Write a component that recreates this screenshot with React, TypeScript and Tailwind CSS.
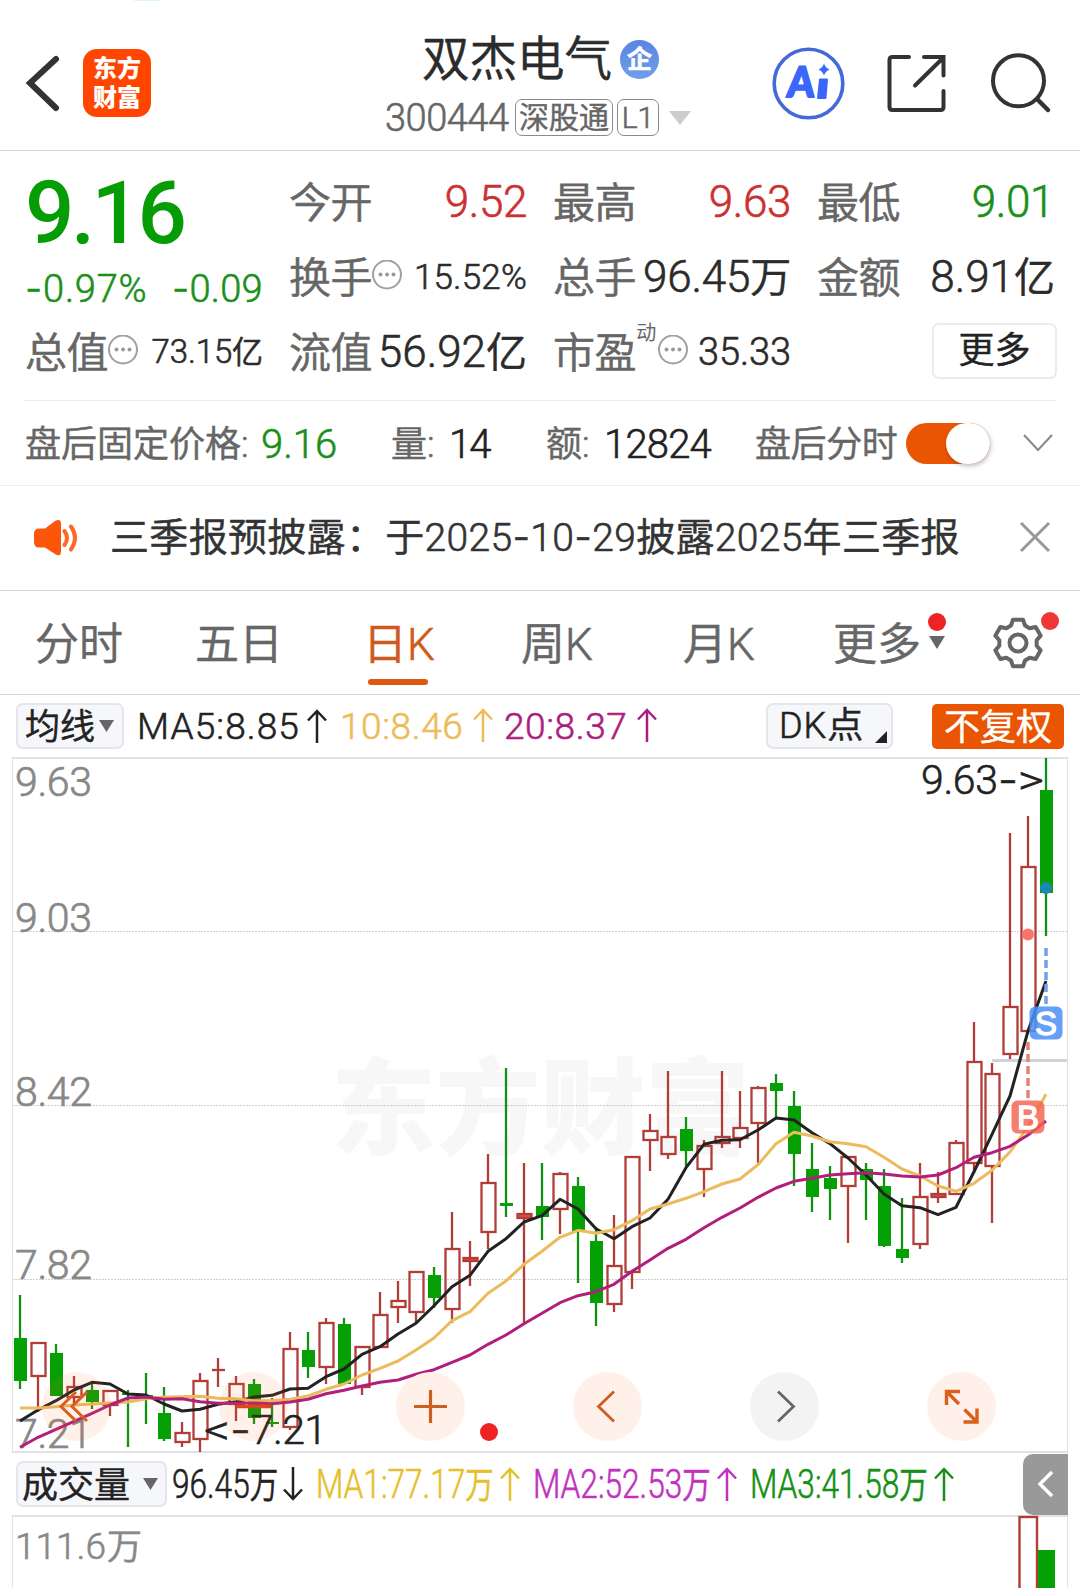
import type { ReactNode } from 'react';

type Candle = [up: boolean, high: number, top: number, bottom: number, low: number];

// [rising, high, body top, body bottom, low]
const candles: Candle[] = [
  [false, 1295, 1338, 1381, 1389],
  [true, 1343, 1343, 1376, 1412],
  [false, 1344, 1353, 1396, 1396],
  [true, 1376, 1387, 1397, 1405],
  [false, 1383, 1390, 1402, 1409],
  [true, 1390, 1391, 1405, 1416],
  [false, 1390, 1393, 1395, 1447],
  [false, 1373, 1395, 1397, 1424],
  [false, 1387, 1413, 1439, 1441],
  [true, 1422, 1433, 1442, 1447],
  [true, 1373, 1381, 1439, 1452],
  [true, 1358, 1370, 1370, 1387],
  [true, 1376, 1384, 1404, 1421],
  [false, 1379, 1384, 1418, 1424],
  [false, 1398, 1422, 1424, 1427],
  [true, 1332, 1349, 1427, 1430],
  [false, 1332, 1350, 1367, 1378],
  [true, 1318, 1323, 1367, 1384],
  [false, 1318, 1324, 1384, 1384],
  [true, 1346, 1347, 1387, 1395],
  [true, 1292, 1315, 1347, 1347],
  [true, 1281, 1301, 1307, 1323],
  [true, 1272, 1272, 1312, 1323],
  [false, 1267, 1275, 1298, 1308],
  [true, 1212, 1249, 1309, 1323],
  [true, 1241, 1258, 1261, 1286],
  [true, 1154, 1183, 1232, 1249],
  [false, 1068, 1203, 1206, 1217],
  [true, 1163, 1214, 1218, 1323],
  [false, 1163, 1206, 1217, 1240],
  [true, 1172, 1174, 1209, 1234],
  [false, 1177, 1186, 1231, 1283],
  [false, 1227, 1241, 1303, 1326],
  [true, 1215, 1266, 1304, 1312],
  [true, 1157, 1157, 1272, 1289],
  [true, 1114, 1131, 1140, 1171],
  [true, 1071, 1137, 1154, 1159],
  [false, 1117, 1129, 1151, 1166],
  [true, 1140, 1146, 1169, 1197],
  [true, 1071, 1137, 1143, 1148],
  [true, 1091, 1128, 1138, 1148],
  [true, 1086, 1088, 1123, 1163],
  [false, 1074, 1083, 1091, 1117],
  [false, 1091, 1106, 1154, 1186],
  [false, 1143, 1169, 1197, 1212],
  [false, 1166, 1178, 1189, 1220],
  [true, 1157, 1157, 1186, 1243],
  [false, 1163, 1169, 1180, 1220],
  [false, 1169, 1186, 1246, 1247],
  [false, 1198, 1249, 1258, 1263],
  [true, 1163, 1197, 1244, 1249],
  [true, 1172, 1194, 1197, 1203],
  [true, 1140, 1143, 1194, 1194],
  [true, 1022, 1062, 1163, 1173],
  [true, 1063, 1074, 1166, 1223],
  [true, 833, 1007, 1054, 1059],
  [true, 816, 867, 1031, 1031],
  [false, 758, 790, 893, 936],
];

const ma5 = [
  1421, 1410, 1400.7, 1390, 1382.3, 1384, 1394, 1395, 1404, 1411, 1409.3, 1404.3, 1401.7, 1397, 1395.3, 1389, 1388.3,
  1376.7, 1369, 1354.3, 1346.7, 1334, 1323.3, 1305.7, 1286.7, 1275.3, 1251.3, 1238.7, 1222, 1215.7, 1199.3, 1209,
  1228.7, 1238.7, 1226.7, 1218, 1199.3, 1167.7, 1144.3, 1140.3, 1139.7, 1130, 1118, 1120, 1132.7, 1143.7, 1158, 1175,
  1194, 1205.7, 1207.7, 1214.7, 1207.3, 1171.7, 1134.3, 1096, 1031, 981,
];

const ma10 = [
  1408, 1408, 1406.7, 1405, 1404, 1403, 1402, 1398.7, 1397, 1396.7, 1396.3, 1398.3, 1398.7, 1400.7, 1400.7, 1399.3,
  1396, 1389.3, 1384, 1375, 1368.3, 1361, 1350, 1338, 1320.7, 1311.7, 1293.3, 1281, 1264.3, 1251.3, 1237.3, 1230.3,
  1233.3, 1229.7, 1220.7, 1209, 1204, 1198.3, 1191.7, 1184, 1179, 1164.7, 1143.7, 1132.3, 1136, 1141.7, 1143.7,
  1146.7, 1157.3, 1169, 1176, 1186, 1191.3, 1183.3, 1170.3, 1152, 1126.7, 1094.3,
];

const ma20 = [
  1447.3, 1437.3, 1429.3, 1421.3, 1413.3, 1405, 1398, 1397, 1399.3, 1398.7, 1401.7, 1403.3, 1403.3, 1403, 1403.7, 1402,
  1399.3, 1393.7, 1390.3, 1386, 1382.3, 1380, 1374.3, 1369.7, 1362.3, 1355, 1344.3, 1335, 1323.7, 1313.3, 1302.7,
  1295.7, 1291.7, 1284.3, 1271.3, 1260, 1248.3, 1239.3, 1227.7, 1217.3, 1208, 1197.3, 1188, 1181.3, 1178.3, 1175,
  1173.7, 1172.7, 1174, 1176, 1177, 1175, 1167.7, 1157.3, 1152.7, 1146.3, 1135, 1121,
];

const toPoints = (ys: number[]) => ys.map((y, i) => `${20 + i * 18},${y}`).join(' ');

const gearPoints = [0, 1, 2, 3, 4, 5]
  .flatMap((k) => {
    const a = (k * Math.PI) / 3;
    return [
      [-7, -17.5],
      [-5, -23.3],
      [5, -23.3],
      [7, -17.5],
    ].map(([x, y]) => `${x * Math.cos(a) - y * Math.sin(a)},${x * Math.sin(a) + y * Math.cos(a)}`);
  })
  .join(' ');

// Roboto's hyphen is too short for prices and dates
const Num = ({ children }: { children: string }) => (
  <>
    {children.split('-').map((part, i) => (
      <span key={i}>
        {i > 0 && <span className="font-['Inter']">-</span>}
        {part}
      </span>
    ))}
  </>
);

const MoreDots = () => (
  <svg width="30" height="32" viewBox="0 0 30 32" className="mb-[2px] shrink-0">
    <circle cx="15" cy="14.500" r="14" fill="none" stroke="#a0a0a0" strokeWidth="2" />
    <circle cx="8.5" cy="14.500" r="2" fill="#999" />
    <circle cx="15" cy="14.500" r="2" fill="#999" />
    <circle cx="21.5" cy="14.500" r="2" fill="#999" />
  </svg>
);

const Arrow = ({ down = false }: { down?: boolean }) => (
  <svg width="20" height="34" viewBox="0 0 20 34" className={down ? 'shrink-0 rotate-180' : 'shrink-0'}>
    <path d="M10 34V2M1 11.5L10 2L19 11.5" fill="none" stroke="currentColor" strokeWidth="2.5" />
  </svg>
);

const Cell = ({ label, children, className = '' }: { label: string; children: ReactNode; className?: string }) => (
  <div className={`flex h-[75px] items-center whitespace-nowrap text-[42px] text-[#2b2b2b] ${className}`}>
    <span className="pt-[4px] tracking-[-0.4px] text-[#666]">{label}</span>
    {children}
  </div>
);

const Header = () => (
  <header className="flex h-[151px] border-b border-[#d5d5d5] pl-[25px]">
    <svg width="36" height="60" viewBox="0 0 36 60" className="mt-[53px]">
      <path d="M31 6L5 30L31 55" fill="none" stroke="#333" strokeWidth="6" strokeLinecap="round" />
    </svg>
    <div className="mt-[49px] ml-[22px] flex h-[68px] w-[68px] flex-col items-center justify-center rounded-[14px] bg-[#ff4500] pt-[2px] text-[24px] leading-[29px] font-black text-white [-webkit-text-stroke:0px]">
      <span>东方</span>
      <span>财富</span>
    </div>

    <div className="ml-[233px] w-[310px] pt-[34px]">
      <div className="flex h-[50px] items-center pl-[38px]">
        <span className="w-[198px] pt-[4px] text-[47.5px] leading-none whitespace-nowrap text-[#2b2b2b]">双杰电气</span>
        <span className="flex h-[39px] w-[39px] items-center justify-center rounded-full bg-linear-to-b from-[#5a84e2] to-[#719eea] pt-[1px] text-[25px] leading-none font-bold text-white">
          企
        </span>
      </div>
      <div className="mt-[15px] flex h-[37px] items-center text-[#666]">
        <span className="w-[131px] pl-[1px] text-[38px] leading-none tracking-[-0.5px]">300444</span>
        <span className="flex h-[37px] w-[98px] items-center justify-center rounded-[7px] border border-[#8a8a8a] text-[30px] leading-none">
          深股通
        </span>
        <span className="ml-[4px] flex h-[37px] w-[42px] items-center justify-center rounded-[7px] border border-[#8a8a8a] text-[30px] leading-none">
          L1
        </span>
        <svg width="22" height="14" viewBox="0 0 22 14" className="ml-[10px]">
          <path d="M0 0H22L11 14Z" fill="#ccc" />
        </svg>
      </div>
    </div>

    <svg width="74" height="76" viewBox="771 45 74 76" className="mt-[45px] ml-[77px]">
      <circle cx="808.5" cy="83.5" r="34.3" fill="none" stroke="#4469d8" strokeWidth="3.6" />
      <g fill="#3a66fb" stroke="#3a66fb" strokeWidth="2" strokeLinejoin="round">
        <text x="0" y="0" transform="translate(786.5 97) skewX(-4)" fontFamily="Lato" fontWeight="900" fontSize="42" textLength="27" lengthAdjust="spacingAndGlyphs">
          A
        </text>
        <path d="M820 79.500H827L825.500 98H818Z" />
      </g>
      <path d="M824 63.500Q825.500 68 829.500 69.500Q825.500 71 824 75.500Q822.500 71 818.500 69.500Q822.500 68 824 63.500Z" fill="#3a66fb" />
    </svg>
    <svg width="62" height="62" viewBox="886 53 62 62" className="mt-[53px] ml-[41px]">
      <path
        d="M909 57H892.500Q889.500 57 889.500 60V107Q889.500 110 892.500 110H940.500Q943.500 110 943.500 107V91M924 57H943.500V75.500M942 59L915 85.500"
        fill="none"
        stroke="#333"
        strokeWidth="4"
        strokeLinecap="round"
      />
    </svg>
    <svg width="64" height="64" viewBox="988 51 64 64" className="mt-[51px] ml-[40px]">
      <circle cx="1018.500" cy="80.800" r="25.500" fill="none" stroke="#333" strokeWidth="4" />
      <path d="M1037 99L1048 110" stroke="#333" strokeWidth="4.500" strokeLinecap="round" />
    </svg>
  </header>
);

const Quote = () => (
  <section className="px-[25px] pt-[13px]">
    <div className="grid grid-cols-[238px_238px_238px_238px] gap-x-[26px] leading-none">
      <div className="row-span-2 h-[150px] text-[#069c06]">
        <div className="pt-[6px] text-[87px] leading-[86px] font-medium tracking-[-3.5px] whitespace-nowrap [-webkit-text-stroke:0px]">
          9.16
        </div>
        <div className="mt-[13px] flex justify-between text-[38px] text-[#1a901a]">
          <span className="w-[124px] tracking-[0.8px] whitespace-nowrap">
            <Num>-0.97%</Num>
          </span>
          <span className="tracking-[0.3px]">
            <Num>-0.09</Num>
          </span>
        </div>
      </div>
      <Cell label="今开" className="justify-between">
        <span className="text-[44px] tracking-[-0.4px] text-[#cb3131]">9.52</span>
      </Cell>
      <Cell label="最高" className="justify-between">
        <span className="text-[44px] tracking-[-0.4px] text-[#cb3131]">9.63</span>
      </Cell>
      <Cell label="最低" className="justify-between">
        <span className="pr-[1px] text-[44px] tracking-[-0.4px] text-[#1a901a]">9.01</span>
      </Cell>
      <Cell label="换手">
        <MoreDots />
        <span className="ml-auto pt-[2px] text-[35px] tracking-[0.2px]">15.52%</span>
      </Cell>
      <Cell label="总手" className="justify-between">
        <span className="pt-[1px] text-[44px] tracking-[-0.2px]">
          96.45<span className="text-[41px]">万</span>
        </span>
      </Cell>
      <Cell label="金额" className="justify-between">
        <span className="pt-[1px] text-[44px]">
          8.91<span className="text-[41px]">亿</span>
        </span>
      </Cell>
      <Cell label="总值">
        <MoreDots />
        <span className="ml-auto text-[33px] tracking-[-0.1px]">
          73.15<span className="text-[31px]">亿</span>
        </span>
      </Cell>
      <Cell label="流值" className="justify-between">
        <span className="pt-[1px] text-[44px]">
          56.92<span className="text-[41px]">亿</span>
        </span>
      </Cell>
      <Cell label="市盈">
        <span className="mr-[2px] mb-[38px] text-[20px] text-[#666] [-webkit-text-stroke:0.2px]">动</span>
        <MoreDots />
        <span className="ml-auto text-[38px] tracking-[-0.1px]">35.33</span>
      </Cell>
      <div className="flex h-[75px] items-center justify-end">
        <button className="-mr-[2px] mb-[2px] h-[56px] w-[125px] rounded-[7px] border-2 border-[#ebebeb] text-[36px] leading-none text-[#222]">
          更多
        </button>
      </div>
    </div>
  </section>
);

const AfterHours = () => (
  <section className="mt-[11px] border-b border-[#ececec]">
    <div className="ml-[24px] w-[1032px] border-t border-[#ebebeb]" />
    <div className="flex h-[84px] items-center pl-[25px] text-[36px] leading-none whitespace-nowrap text-[#666]">
      <span className="w-[236px] pt-[4px]">盘后固定价格:</span>
      <span className="w-[130px] pt-[3px] text-[40px] text-[#1a901a]">9.16</span>
      <span className="w-[58px] pt-[4px]">量:</span>
      <span className="w-[97px] pt-[3px] text-[40px] tracking-[-2px] text-[#222]">14</span>
      <span className="w-[58px] pt-[4px]">额:</span>
      <span className="w-[151px] pt-[3px] text-[40px] tracking-[-0.8px] text-[#222]">12824</span>
      <span className="w-[151px] pt-[4px] tracking-[-0.4px]">盘后分时</span>
      <span className="flex h-[41px] w-[84px] justify-end rounded-full bg-[#ea5504]">
        <span className="h-[41px] w-[44px] rounded-full bg-white shadow-[1px_2px_4px_rgba(0,0,0,0.25)]" />
      </span>
      <svg width="30" height="18" viewBox="0 0 30 18" className="ml-[33px]">
        <path d="M1 1L15 16L29 1" fill="none" stroke="#888" strokeWidth="2" />
      </svg>
    </div>
  </section>
);

const Notice = () => (
  <section className="flex h-[105px] items-center border-b border-[#d8d8d8] pl-[33px]">
    <svg width="46" height="38" viewBox="0 0 46 38" className="mb-[1px]">
      <path
        d="M6 9.500H12L22 2Q28 -1 28 5V32Q28 38.500 22 35L12 28.500H6Q1 28.500 1 23V15Q1 9.500 6 9.500Z"
        fill="#fb560a"
      />
      <path d="M31.500 12Q36.500 19 31.500 26M38 7.500Q46 19 38 30.500" fill="none" stroke="#fb6a28" strokeWidth="4" strokeLinecap="round" />
    </svg>
    <p className="mb-[2px] ml-[31px] w-[862px] text-[39px] leading-none tracking-[0.32px] whitespace-nowrap text-[#333]">
      <Num>三季报预披露：于2025-10-29披露2025年三季报</Num>
    </p>
    <svg width="30" height="30" viewBox="0 0 30 30" className="mb-[2px] ml-[48px]">
      <path d="M1 1L29 29M29 1L1 29" stroke="#999" strokeWidth="3" />
    </svg>
  </section>
);

const Tabs = () => (
  <nav className="flex h-[104px] items-center border-b border-[#d8d8d8] pl-[35px] text-[44px] leading-none whitespace-nowrap text-[#666]">
    <span className="w-[160px] pt-[4px]">分时</span>
    <span className="w-[172px] pt-[4px]">五日</span>
    <span className="relative w-[154px] pt-[4px] text-[#cf5a1c]">
      <span className="-ml-[4px]">日K</span>
      <span className="absolute top-[60px] left-[1px] h-[6px] w-[60px] rounded-full bg-[#dd5811]" />
    </span>
    <span className="w-[162px] pt-[4px]">周K</span>
    <span className="w-[150px] pt-[4px]">月K</span>
    <span className="w-[96px] pt-[4px]">更多</span>
    <span className="relative w-[62px]">
      <svg width="16" height="13" viewBox="0 0 16 13">
        <path d="M0 0H16L8 13Z" fill="#666" />
      </svg>
      <span className="absolute -top-[23px] -left-[1px] h-[18px] w-[18px] rounded-full bg-[#ee2424]" />
    </span>
    <span className="relative">
      <svg width="54" height="54" viewBox="-27 -27 54 54">
        <polygon points={gearPoints} fill="none" stroke="#666" strokeWidth="4" strokeLinejoin="round" />
        <circle r="8.500" fill="none" stroke="#666" strokeWidth="4" />
      </svg>
      <span className="absolute -top-[4px] left-[50px] h-[18px] w-[18px] rounded-full bg-[#f23535]" />
    </span>
  </nav>
);

const MaBar = () => (
  <div className="flex h-[62px] items-center pl-[16px] text-[37px] leading-none whitespace-nowrap text-[#222]">
    <span className="flex h-[46px] w-[108px] items-center rounded-[7px] border-2 border-[#e4e6eb] bg-[#f6f7fb] pl-[7px] text-[35px]">
      <span className="pt-[3px]">均线</span>
      <svg width="15" height="12" viewBox="0 0 15 12" className="ml-[4px]">
        <path d="M0 0H15L7.500 12Z" fill="#666" />
      </svg>
    </span>
    <span className="ml-[12px] w-[171px] pl-[1px] tracking-[1.1px]">MA5:8.85</span>
    <Arrow />
    <span className="flex text-[#eebb58]">
      <span className="ml-[13px] w-[133px] tracking-[0.6px]">10:8.46</span>
      <Arrow />
    </span>
    <span className="flex text-[#ad1e7c]">
      <span className="ml-[11px] w-[133px] tracking-[0.6px]">20:8.37</span>
      <Arrow />
    </span>
    <span className="relative ml-[109px] h-[46px] w-[127px] rounded-[7px] border-2 border-[#e4e6eb] bg-[#f6f7fb] pl-[11px] text-[36px] leading-[43px] tracking-[1px]">
      DK点
      <svg width="12" height="12" viewBox="0 0 12 12" className="absolute right-[4px] bottom-[4px]">
        <path d="M12 0V12H0Z" fill="#222" />
      </svg>
    </span>
    <span className="ml-[39px] flex h-[45px] w-[132px] items-center justify-center rounded-[5px] bg-[#ea5504] pt-[3px] text-[36px] text-white">
      不复权
    </span>
  </div>
);

const priceLabels = [
  { text: '9.63', y: 795.5 },
  { text: '9.03', y: 931.5 },
  { text: '8.42', y: 1105.5 },
  { text: '7.82', y: 1278.5 },
  { text: '7.21', y: 1448 },
];

const KLine = () => (
  <div className="relative h-[696px]">
    <svg width="1080" height="696" viewBox="0 757 1080 696" className="block">
      <text x="331" y="1146" fontSize="105" fontWeight="900" fill="#f7f7f7" textLength="419">
        东方财富
      </text>
      <path d="M12 931.500H1067M12 1105.500H1067M12 1279.500H1067" stroke="#cfcfcf" strokeDasharray="2 1" />
      <path d="M12.500 758V1452M1067.500 758V1452" stroke="#e2e2e4" />
      <path d="M12 758H1068M12 1452H1068" stroke="#e2e2e4" strokeWidth="2" />
      <path d="M992 1060.500H1067" stroke="#d0d4d8" strokeWidth="3" />

      {priceLabels.map((l) => (
        <text key={l.text} x="15" y={l.y} fontSize="41" fill="#888" stroke="#888" strokeWidth=".7" textLength="77">
          {l.text}
        </text>
      ))}

      {candles.map(([up, high, top, bottom, low], i) => {
        const x = 20 + i * 18;
        return up ? (
          <g key={i} stroke="#b23c38" strokeWidth="2.300" fill="none">
            <path d={`M${x} ${high}V${top}M${x} ${bottom}V${low}`} />
            {bottom > top ? (
              <rect x={x - 6.5} y={top} width="14" height={bottom - top} fill={bottom - top < 5 ? '#e04b48' : 'none'} />
            ) : (
              <path d={`M${x - 6} ${top}H${x + 7}`} />
            )}
          </g>
        ) : (
          <g key={i}>
            <path d={`M${x} ${high}V${low}`} stroke="#129012" strokeWidth="2.300" />
            <rect x={x - 6} y={top} width="13" height={bottom - top} fill="#04a004" />
          </g>
        );
      })}

      <g fill="none" strokeWidth="3" strokeLinejoin="round">
        <polyline points={toPoints(ma5)} stroke="#222" />
        <polyline points={toPoints(ma10)} stroke="#ebbb5c" />
        <polyline points={toPoints(ma20)} stroke="#b01f7c" />
      </g>

      <circle cx="1046" cy="888" r="6" fill="#1b87b5" />
      <circle cx="1028" cy="934.500" r="6" fill="#fb7568" />
      <path d="M1046 948V1004" stroke="#6fa3e6" strokeWidth="3.500" strokeDasharray="8 4" />
      <path d="M1028 1042V1098" stroke="#e38277" strokeWidth="3.500" strokeDasharray="8 4" />
      <rect x="1029.500" y="1006.500" width="33" height="33" rx="6" fill="#4a90f7" opacity=".86" />
      <rect x="1011.500" y="1100.500" width="33" height="33" rx="6" fill="#f4614f" opacity=".82" />
      <g fontFamily="Liberation Sans" fontSize="33" fill="#fff" stroke="#fff" strokeWidth="1.300" textAnchor="middle">
        <text x="1046" y="1035">S</text>
        <text x="1028" y="1129">B</text>
      </g>

      <g fontSize="41" fill="#222" stroke="#222" strokeWidth=".6">
        <text x="921" y="794" textLength="77">9.63</text>
        <text x="998" y="794" fontFamily="Inter" fontSize="39" textLength="20" lengthAdjust="spacingAndGlyphs">-</text>
        <text x="1018" y="794" textLength="26" lengthAdjust="spacingAndGlyphs">&gt;</text>
        <text x="204" y="1444" textLength="26" lengthAdjust="spacingAndGlyphs">&lt;</text>
        <text x="230" y="1444" fontFamily="Inter" fontSize="39" textLength="21" lengthAdjust="spacingAndGlyphs">-</text>
        <text x="251" y="1444" textLength="76">7.21</text>
      </g>
    </svg>

    {/* chart controls */}
    <div className="absolute top-[615px] left-[42px] flex gap-[108px]">
      <button className="h-[69px] w-[69px] rounded-full bg-[#ff6b2b]/10">
        <svg width="69" height="69" viewBox="0 0 69 69" fill="none" stroke="#d9601c" strokeWidth="3">
          <path d="M34 20L19 34.500L34 49M45 20L30 34.500L45 49" />
        </svg>
      </button>
      <button className="h-[69px] w-[69px] rounded-full bg-[#ff6b2b]/10">
        <svg width="69" height="69" viewBox="0 0 69 69" fill="none" stroke="#e0451c" strokeWidth="3.500">
          <path d="M18 34.500H52" />
        </svg>
      </button>
      <button className="h-[69px] w-[69px] rounded-full bg-[#fff1ea]">
        <svg width="69" height="69" viewBox="0 0 69 69" fill="none" stroke="#cc5f20" strokeWidth="3.200">
          <path d="M18 34.500H51M34.500 18V51" />
        </svg>
      </button>
      <button className="h-[69px] w-[69px] rounded-full bg-[#fff1ea]">
        <svg width="69" height="69" viewBox="0 0 69 69" fill="none" stroke="#cc5f20" strokeWidth="2.800">
          <path d="M41 19.500L25.500 34.500L41 49.500" />
        </svg>
      </button>
      <button className="h-[69px] w-[69px] rounded-full bg-[#f3f3f3]">
        <svg width="69" height="69" viewBox="0 0 69 69" fill="none" stroke="#666" strokeWidth="2.800">
          <path d="M28 19.500L43.500 34.500L28 49.500" />
        </svg>
      </button>
      <button className="h-[69px] w-[69px] rounded-full bg-[#fff1ea]">
        <svg width="69" height="69" viewBox="0 0 69 69" fill="none" stroke="#d9601c" strokeWidth="3.400">
          <path d="M33 19.500H19.500V33M19.500 19.500L32 32M50 36.500V50H36.500M50 50L37.500 37.500" />
        </svg>
      </button>
    </div>
    <span className="absolute top-[666px] left-[480px] h-[18px] w-[18px] rounded-full bg-[#ee2424]" />
  </div>
);

const Narrow = ({ children, className }: { children: ReactNode; className: string }) => (
  <span className={className}>
    <span className="inline-block origin-left scale-x-[0.79] pt-[2px] text-[40px]">{children}</span>
  </span>
);

const VolumeBar = () => (
  <div className="flex h-[62px] items-center pl-[16px] leading-none whitespace-nowrap text-[#222]">
    <span className="flex h-[46px] w-[151px] items-center rounded-[7px] border-2 border-[#e4e6eb] bg-[#f6f7fb] pl-[4px] text-[36px]">
      <span className="pt-[3px]">成交量</span>
      <svg width="15" height="12" viewBox="0 0 15 12" className="ml-[13px]">
        <path d="M0 0H15L7.500 12Z" fill="#666" />
      </svg>
    </span>
    <Narrow className="ml-[5px] w-[111px]">
      96.45<span className="text-[36px]">万</span>
    </Narrow>
    <Arrow down />
    <span className="flex items-center text-[#e6c02c]">
      <Narrow className="ml-[13px] w-[184px]">
        MA1:77.17<span className="text-[36px]">万</span>
      </Narrow>
      <Arrow />
    </span>
    <span className="flex items-center text-[#bf33bf]">
      <Narrow className="ml-[13px] w-[184px]">
        MA2:52.53<span className="text-[36px]">万</span>
      </Narrow>
      <Arrow />
    </span>
    <span className="flex items-center text-[#169016]">
      <Narrow className="ml-[13px] w-[184px]">
        MA3:41.58<span className="text-[36px]">万</span>
      </Narrow>
      <Arrow />
    </span>
    <span className="ml-auto mr-[12px] flex h-[61px] w-[45px] items-center justify-center rounded-l-[10px] bg-[#999]">
      <svg width="18" height="30" viewBox="0 0 18 30">
        <path d="M15 3L3 15L15 27" fill="none" stroke="#fff" strokeWidth="3.500" />
      </svg>
    </span>
  </div>
);

const Volume = () => (
  <svg width="1080" height="73" viewBox="0 1515 1080 73" className="block">
    <path d="M12.500 1516V1588M1067.500 1516V1588" stroke="#e2e2e4" />
    <path d="M12 1516H1068" stroke="#e2e2e4" strokeWidth="2" />
    <text x="15" y="1558.500" fontSize="37" fill="#888" stroke="#888" strokeWidth=".6">
      <tspan textLength="91">111.6</tspan>
      <tspan x="107" fontSize="35">万</tspan>
    </text>
    <rect x="1019.500" y="1517" width="17.500" height="80" fill="none" stroke="#b23c38" strokeWidth="2.400" />
    <rect x="1038" y="1550" width="17" height="40" fill="#04a004" />
  </svg>
);

export default function App() {
  return (
    <main className="relative h-[1588px] w-[1080px] overflow-hidden bg-white font-['Roboto','Noto_Sans_CJK_SC',sans-serif] font-[350] [-webkit-text-stroke:0.6px]">
      <span className="absolute top-0 left-[134px] h-[1px] w-[27px] rounded-b-full bg-[#d9f7f7]" />
      <Header />
      <Quote />
      <AfterHours />
      <Notice />
      <Tabs />
      <MaBar />
      <KLine />
      <VolumeBar />
      <Volume />
    </main>
  );
}
